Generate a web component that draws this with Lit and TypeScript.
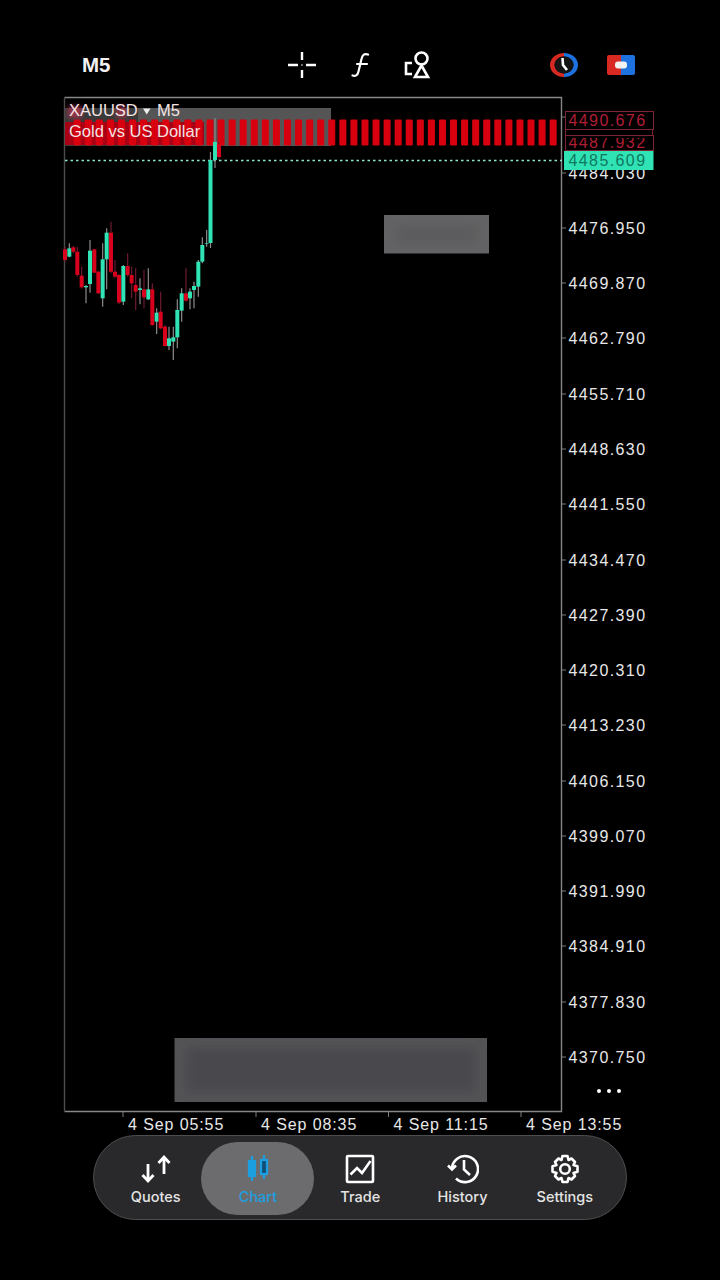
import { LitElement, html, svg, css } from 'lit';
import { customElement } from 'lit/decorators.js';

// x, wick top, body top, body bottom, wick bottom, up? (units: 1/3 px, see the group transform)
const CANDLES: [number, number, number, number, number, boolean][] = [
  [15, 110, 118, 150, 155, false],
  [28, 100, 115, 140, 142, true],
  [40, 108, 112, 125, 130, false],
  [52, 110, 125, 195, 200, false],
  [65, 170, 197, 232, 236, false],
  [78, 225, 228, 232, 280, true],
  [90, 90, 122, 222, 248, true],
  [103, 116, 118, 188, 190, false],
  [115, 183, 185, 250, 252, false],
  [128, 100, 148, 265, 290, true],
  [140, 55, 68, 148, 238, true],
  [153, 35, 68, 185, 190, false],
  [165, 150, 185, 200, 204, false],
  [177, 193, 195, 278, 282, false],
  [190, 165, 168, 275, 285, true],
  [203, 130, 168, 195, 200, false],
  [215, 170, 195, 220, 265, false],
  [227, 175, 225, 245, 300, false],
  [240, 205, 235, 240, 283, true],
  [252, 180, 238, 262, 295, false],
  [265, 175, 238, 268, 270, true],
  [277, 220, 238, 345, 348, false],
  [290, 295, 308, 335, 372, true],
  [302, 245, 305, 355, 358, false],
  [315, 345, 350, 408, 410, false],
  [327, 350, 385, 408, 420, true],
  [340, 350, 382, 395, 450, true],
  [352, 268, 300, 382, 415, true],
  [365, 235, 250, 302, 335, true],
  [378, 175, 250, 272, 275, false],
  [390, 235, 245, 265, 298, true],
  [402, 215, 228, 240, 295, true],
  [415, 150, 155, 230, 260, true],
  [427, 82, 105, 155, 160, true],
  [440, 60, 99, 101, 110, true],
  [451.5, -174, -150, 99, 114, true],
  [465, -276, -204, -150, -126, true],
  [477, -204, -198, -159, -150, false],
];

const PRICES = [
  ['4476.950', 228], ['4469.870', 283], ['4462.790', 338], ['4455.710', 394],
  ['4448.630', 449], ['4441.550', 504], ['4434.470', 560], ['4427.390', 615],
  ['4420.310', 670], ['4413.230', 725], ['4406.150', 781], ['4399.070', 836],
  ['4391.990', 891], ['4384.910', 946], ['4377.830', 1002], ['4370.750', 1057],
] as [string, number][];

const TIMES = [
  ['4 Sep 05:55', 123], ['4 Sep 08:35', 256], ['4 Sep 11:15', 388.500], ['4 Sep 13:55', 521],
] as [string, number][];

const GREEN = '#2fe3b4';
const RED = '#d8000f';

@customElement('chart-canvas')
export class ChartCanvas extends LitElement {
  static styles = css`
    :host { display: block; width: 720px; height: 1039px; }
    svg { display: block; font-family: 'Liberation Sans', Arial, sans-serif; }
    .axis { font-size: 16px; letter-spacing: 1.4px; fill: #e8e8e8; }
    .time { font-size: 16px; letter-spacing: 0.9px; fill: #e8e8e8; }
    .legend { font-size: 16.5px; fill: #f4e4e4; }
    .tick { stroke: #7c7c7c; }
    .bad { fill: #b01e36; }
    .bad-box { fill: #000; stroke: #7d2434; }
  `;

  private redBars() {
    const bars = [];
    for (let n = -12; n < 32; n++) {
      bars.push(svg`<rect x=${206.5 + n * 11.07} y="119.500" width="7" height="26" rx="1" fill=${RED} />`);
    }
    return bars;
  }

  render() {
    // the svg uses page coordinates, the host starts at y=96
    return html`<svg width="720" height="1039" viewBox="0 96 720 1039">
      <defs>
        <filter id="soft" x="-30%" y="-30%" width="160%" height="160%">
          <feGaussianBlur stdDeviation="5" />
        </filter>
        <filter id="smear" x="-50%" y="-50%" width="200%" height="200%">
          <feGaussianBlur stdDeviation="2" />
        </filter>
      </defs>

      <path d="M64.500 97.500H561.500V1111.500H64.500" fill="none" stroke="#868686" stroke-width="1.400" />
      <line x1="64.500" x2="64.500" y1="98" y2="1111" stroke="#4c4c4c" stroke-width="1.400" />

      <rect x="65" y="108" width="73" height="38" fill="#3a3a3a" />
      <rect x="138" y="108" width="193" height="38" fill="#555" />
      <rect x="65" y="122" width="139" height="23" fill="#a80014" />
      ${this.redBars()}
      <rect x="68" y="106" width="14" height="12" fill="#c03050" opacity="0.7" filter="url(#smear)" />
      <rect x="116" y="106" width="11" height="12" fill="#c03050" opacity="0.6" filter="url(#smear)" />

      <line x1="65" x2="562" y1="160.500" y2="160.500" stroke="#8fe6cf" stroke-width="1.400" stroke-dasharray="2.500 3" />

      <g transform="translate(60 210) scale(0.3333)">
        ${CANDLES.map(([x, wt, bt, bb, wb, up]) => svg`
          <line x1=${x} x2=${x} y1=${wt} y2=${wb} stroke=${up ? '#8c8c8c' : '#6e1a30'} stroke-width="3.600" />
          <rect x=${x - 6} y=${bt} width="12" height=${bb - bt} fill=${up ? GREEN : '#d8001c'} />
        `)}
      </g>

      <text class="legend" x="69" y="116">XAUUSD</text>
      <path d="M143 108.500h7.500l-3.750 6z" fill="#eee" />
      <text class="legend" x="157" y="116">M5</text>
      <text class="legend" x="69" y="137">Gold vs US Dollar</text>

      <rect x="384" y="215" width="105" height="38.500" fill="#636365" />
      <rect x="396" y="225" width="81" height="18" fill="#5b5b5d" filter="url(#soft)" />
      <rect x="174.500" y="1038" width="312.500" height="64" fill="#535356" />
      <rect x="186" y="1048" width="290" height="44" fill="#4a4a4d" filter="url(#soft)" />

      ${PRICES.map(([p, y]) => svg`
        <line class="tick" x1="562" x2="566" y1=${y} y2=${y} />
        <text class="axis" x="568.500" y=${y + 6}>${p}</text>
      `)}
      <line class="tick" x1="562" x2="566" y1="173" y2="173" />
      <text class="axis" x="568.500" y="179">4484.030</text>

      <line class="tick" x1="562" x2="566" y1="117" y2="117" />
      <rect class="bad-box" x="565.500" y="111.500" width="88" height="18" />
      <text class="axis bad" x="568.500" y="125.500">4490.676</text>
      <rect class="bad-box" x="565.500" y="129.500" width="87" height="6" />
      <rect class="bad-box" x="565.500" y="135.500" width="88" height="15" />
      <text class="axis bad" x="568.500" y="147.500">4487.932</text>
      <rect x="566" y="136" width="87" height="2" fill="#000" />
      <rect x="564" y="151" width="89.500" height="19" fill=${GREEN} />
      <text class="axis" x="568.500" y="166" style="fill:#0f7860">4485.609</text>

      <circle cx="599" cy="1091" r="2" fill="#fff" />
      <circle cx="609" cy="1091" r="2" fill="#fff" />
      <circle cx="619" cy="1091" r="2" fill="#fff" />

      ${TIMES.map(([t, x]) => svg`
        <line class="tick" x1=${x} x2=${x} y1="1112" y2="1117" />
        <text class="time" x=${x + 5} y="1130">${t}</text>
      `)}
    </svg>`;
  }
}

@customElement('app-root')
export class AppRoot extends LitElement {
  static styles = css`
    :host {
      display: block;
      width: 720px;
      height: 1280px;
      background: #000;
      font-family: 'Liberation Sans', Arial, sans-serif;
      overflow: hidden;
    }
    .toolbar {
      height: 96px;
      box-sizing: border-box;
      padding: 34px 84px 0 82px;
      display: flex;
      align-items: center;
      color: #f2f2f2;
    }
    .period { font-size: 20.500px; font-weight: 700; width: 205px; }
    .tools { display: flex; align-items: center; gap: 27.500px; flex: 1; }
    .accounts { display: flex; align-items: center; gap: 27px; }
    .tools svg, .accounts svg { display: block; }
    .nav-wrap { display: flex; justify-content: center; }
    .nav {
      width: 534px;
      height: 85px;
      box-sizing: border-box;
      border-radius: 43px;
      border: 1.500px solid #4e4e50;
      background: #29292b;
      display: grid;
      grid-template-columns: repeat(5, 102.300px);
      padding: 2px 0 0 10.500px;
      align-items: center;
    }
    .item {
      display: flex;
      flex-direction: column;
      align-items: center;
      justify-content: center;
      gap: 4px;
      height: 73px;
      box-sizing: border-box;
      padding-top: 1px;
      color: #e4e4e4;
      font-family: Inter, 'Liberation Sans', Arial, sans-serif;
      font-size: 14.500px;
      font-weight: 500;
      line-height: 17px;
    }
    .item svg { display: block; }
    .item.active {
      color: #1c9fe0;
      background: #6c6c6e;
      border-radius: 37px;
      width: 113px;
      justify-self: center;
    }
  `;

  render() {
    return html`
      <div class="toolbar">
        <div class="period">M5</div>
        <div class="tools">
          <svg width="30" height="30" viewBox="0 0 30 30" stroke="#fff" stroke-width="2.400" fill="none">
            <path d="M1 15h10M19 15h10M15 2v8M15 20v8" />
            <circle cx="15" cy="15" r="0.800" fill="#fff" stroke="none" />
          </svg>
          <svg width="30" height="30" viewBox="0 0 30 30" stroke="#fff" stroke-width="2.200" fill="none" stroke-linecap="round">
            <path d="M23 4.500c-3.500-1.300-5.500.2-6.500 4.500l-3 12.500c-.9 4-3.200 5-6 4M12 14h10" />
          </svg>
          <svg width="30" height="30" viewBox="0 0 30 30" stroke="#fff" stroke-width="2.600" fill="none">
            <circle cx="19.500" cy="8.500" r="6" />
            <path d="M19.500 15.500l-6.500 11.500h13zM10 13H4v11h6" />
          </svg>
        </div>
        <div class="accounts">
          <svg width="30" height="26" viewBox="0 0 30 26" fill="none">
            <path d="M15 1a14 12 0 0 0 0 24v-3.500a9.500 8.500 0 0 1 0-17z" fill="#d82a22" />
            <path d="M15 1a14 12 0 0 1 0 24v-3.500a9.500 8.500 0 0 0 0-17z" fill="#1e72e0" />
            <ellipse cx="15" cy="13" rx="9.500" ry="8.500" fill="#141414" />
            <path d="M13.500 6l.5 7 4 5" stroke="#fff" stroke-width="2.600" />
          </svg>
          <svg width="30" height="20" viewBox="0 0 30 20" fill="none">
            <path d="M3 0h12v20H3a2 2 0 0 1-2-2V2a2 2 0 0 1 2-2z" fill="#d82a22" />
            <path d="M15 0h12a2 2 0 0 1 2 2v16a2 2 0 0 1-2 2H15z" fill="#1e72e0" />
            <rect x="9" y="6.500" width="12" height="7" rx="3" fill="#f2f2f2" />
          </svg>
        </div>
      </div>
      <chart-canvas></chart-canvas>
      <div class="nav-wrap">
        <nav class="nav">
          <div class="item">
            <svg width="32" height="30" viewBox="0 0 32 30" stroke="#fff" stroke-width="2.800" fill="none">
              <path d="M8 10v17M2.500 21l5.500 6 5.500-6M24 20V3M18.500 9L24 3l5.500 6" />
            </svg>
            <span>Quotes</span>
          </div>
          <div class="item active">
            <svg width="32" height="30" viewBox="0 0 32 30" stroke="#1c9fe0" stroke-width="2.200" fill="none">
              <path d="M10 2v25M22 1v24" />
              <rect x="7" y="7" width="6" height="15" fill="#1c9fe0" />
              <rect x="19" y="6" width="6" height="14" fill="#0f4f78" />
            </svg>
            <span>Chart</span>
          </div>
          <div class="item">
            <svg width="30" height="30" viewBox="0 0 30 30" stroke="#fff" stroke-width="2.600" fill="none">
              <rect x="2" y="2" width="26" height="26" rx="1" />
              <path d="M5.500 20.500l6.500-6.500 5 5 8.500-12" />
            </svg>
            <span>Trade</span>
          </div>
          <div class="item">
            <svg width="32" height="30" viewBox="0 0 32 30" stroke="#fff" stroke-width="2.600" fill="none">
              <path d="M5 15a13 13 0 1 1 4 9.500" />
              <path d="M1 11.500l4 4 4-4" />
              <path d="M17 6v9.500l6 5.500" />
            </svg>
            <span>History</span>
          </div>
          <div class="item">
            <svg width="30" height="30" viewBox="0 0 30 30" stroke="#fff" stroke-width="2.600" fill="none" stroke-linejoin="round">
              <circle cx="15" cy="15" r="4.800" />
              <path d="M12.500 2h5l1 4 3-1.500 3.500 3.500-1.500 3 4 1.200v5.600l-4 1.200 1.500 3-3.500 3.500-3-1.500-1 4h-5l-1-4-3 1.500-3.500-3.500 1.500-3-4-1.200v-5.600l4-1.200-1.500-3 3.500-3.500 3 1.500z" />
            </svg>
            <span>Settings</span>
          </div>
        </nav>
      </div>
    `;
  }
}
